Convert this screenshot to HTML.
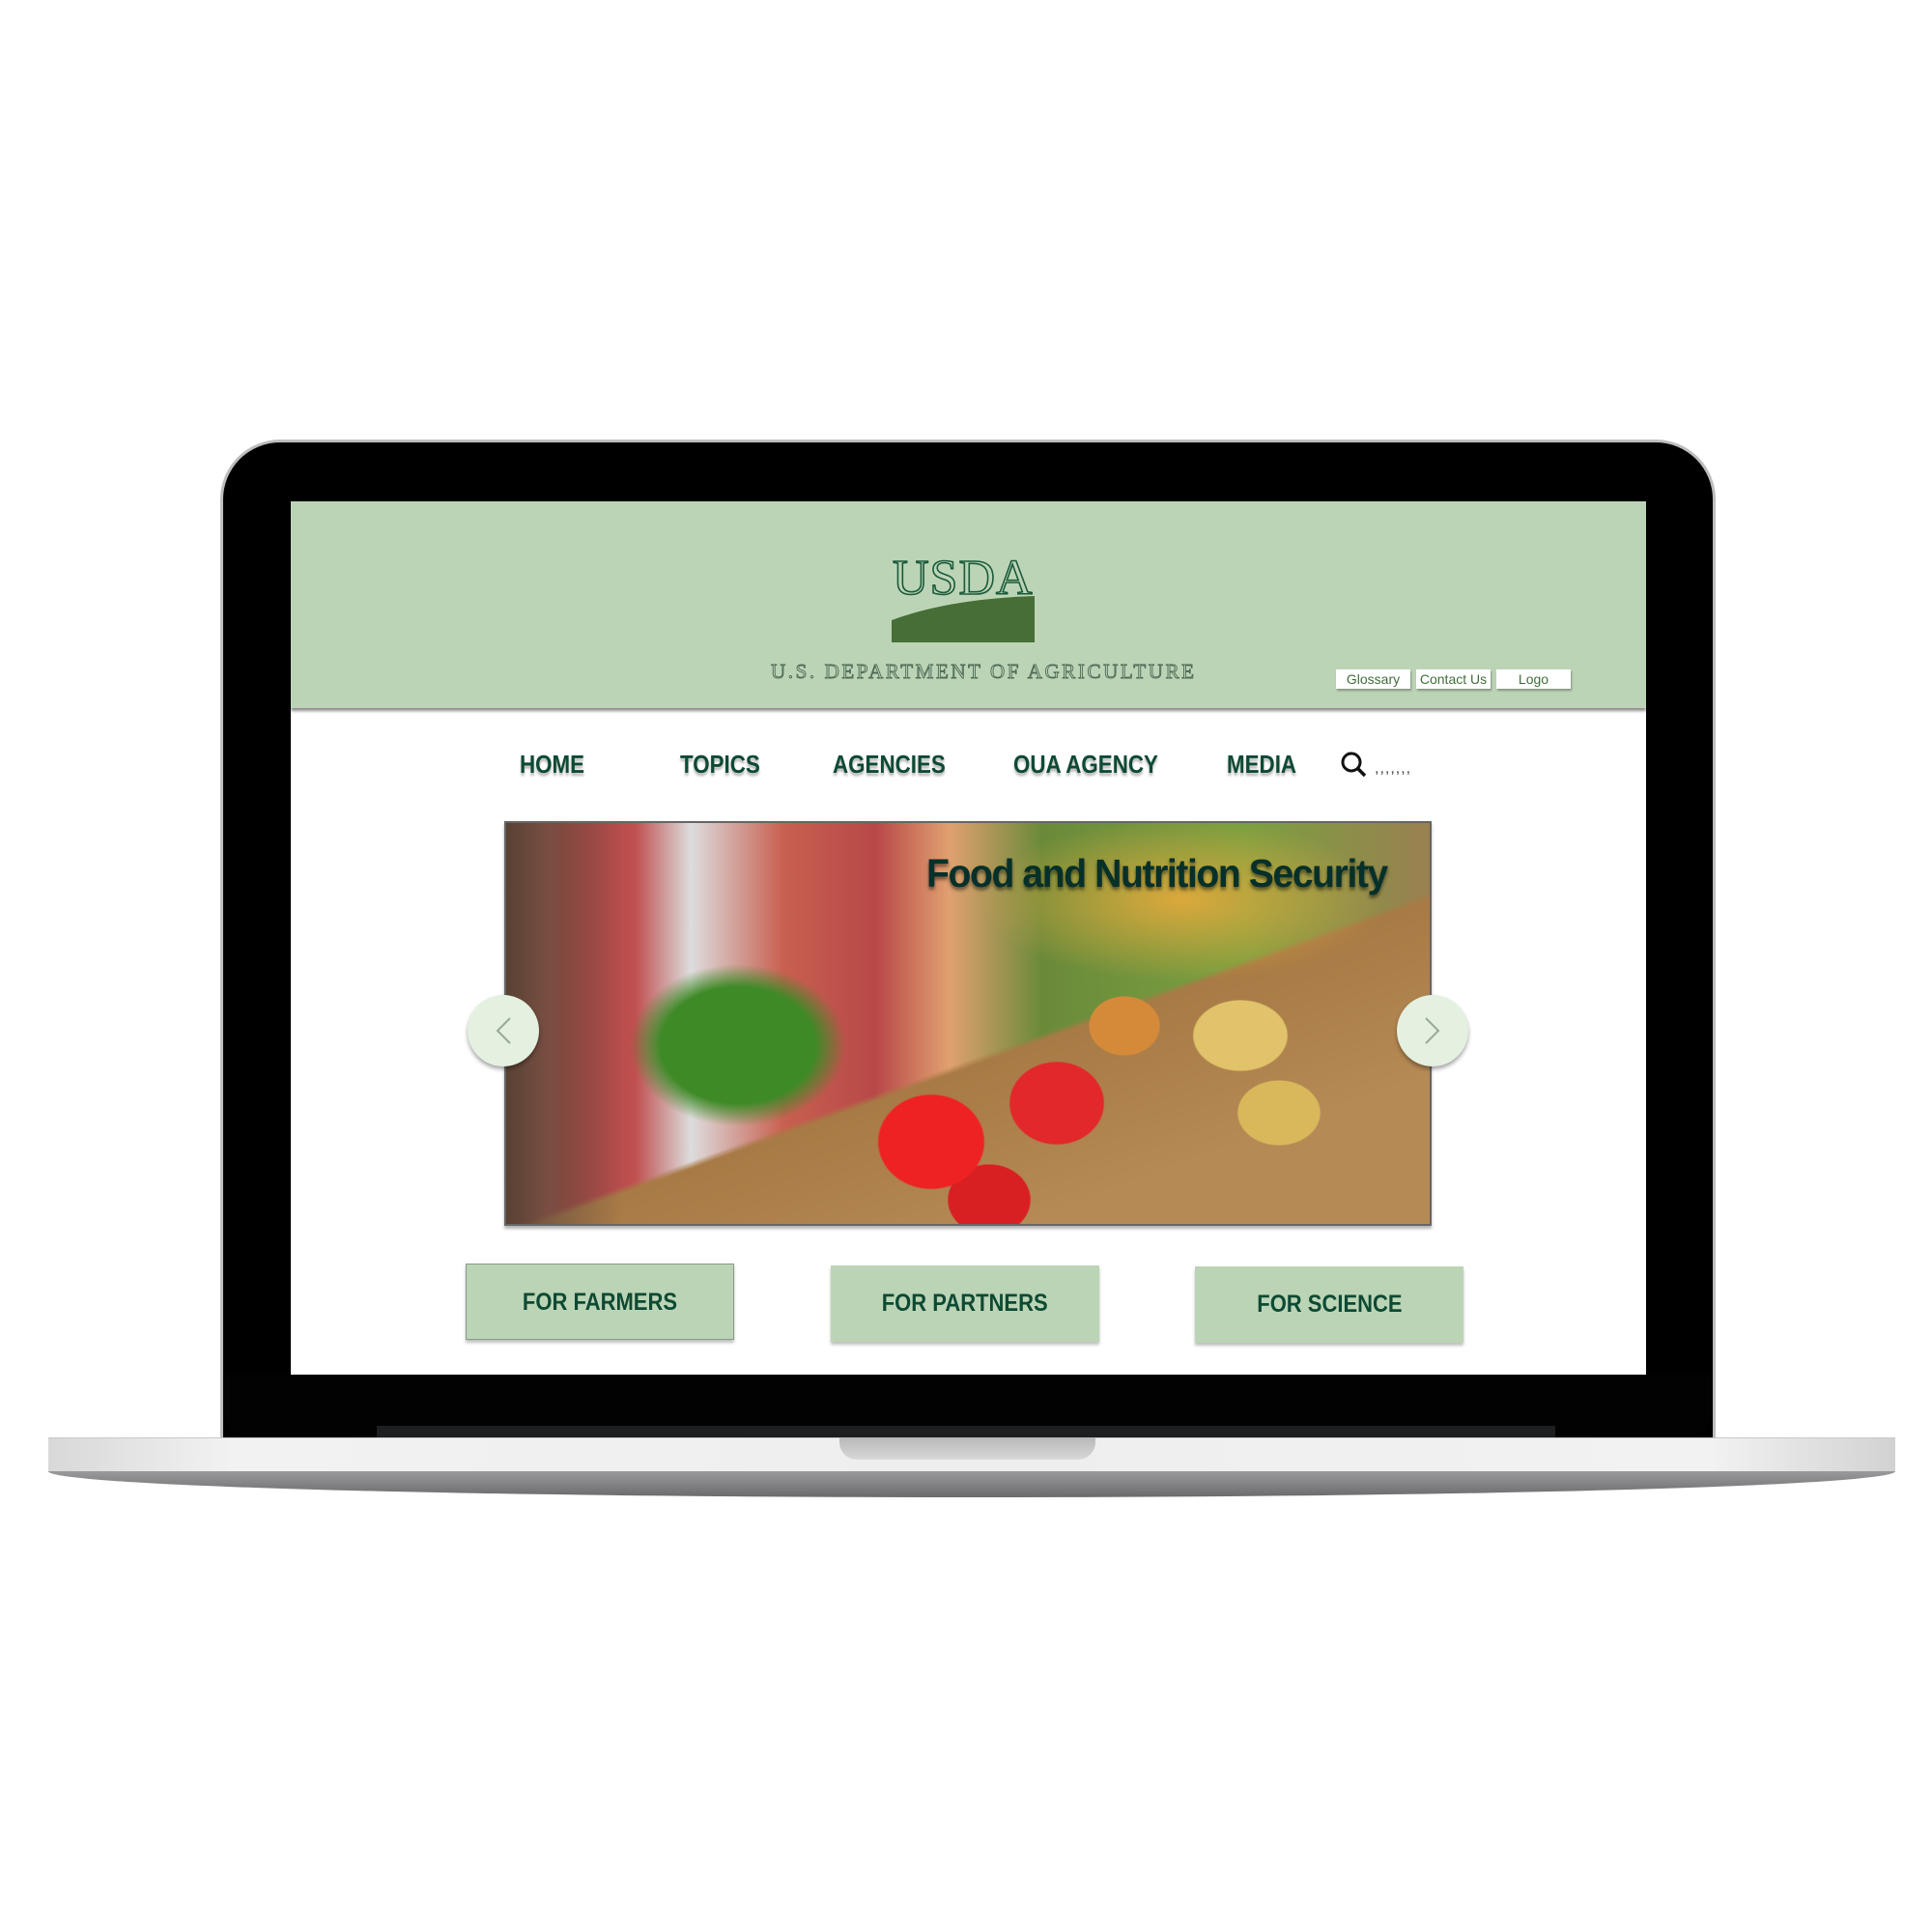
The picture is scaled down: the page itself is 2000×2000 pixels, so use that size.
<!DOCTYPE html>
<html><head><meta charset="utf-8"><style>
*{margin:0;padding:0;box-sizing:border-box}
body{width:2000px;height:2000px;background:#fff;position:relative;overflow:hidden;font-family:"Liberation Sans",sans-serif}
.abs{position:absolute}
#lid{left:228px;top:455px;width:1548px;height:1040px;background:#000;border-radius:62px 62px 0 0;border:3px solid #bdbdbd;border-bottom:none}
#lidlow{left:232px;top:1423px;width:1540px;height:66px;background:#020202;border-radius:0 0 30px 30px}
#hinge{left:390px;top:1476px;width:1220px;height:12px;background:#1c1e20}
#screen{left:301px;top:519px;width:1403px;height:904px;background:#fff;overflow:hidden}
#hdr{left:0;top:0;width:1403px;height:214px;background:#bcd4b6;box-shadow:0 3px 3px rgba(0,0,0,.45)}
#base{left:50px;top:1488px;width:1912px;height:36px;background:linear-gradient(90deg,#d8d8d8,#f2f2f2 10%,#eeeeee 50%,#f2f2f2 90%,#d2d2d2);border-top:1px solid #c8c8c8}
#base2{left:50px;top:1523px;width:1912px;height:27px;background:linear-gradient(#9a9a9c,#6a6a6e);border-radius:0 0 50% 50%/0 0 100% 100%}
#notch{left:869px;top:1488px;width:265px;height:23px;background:linear-gradient(#b8b8b8,#d8d8d8);border-radius:0 0 18px 18px}
.tb{position:absolute;top:174px;height:20px;background:#fff;color:#3f6f3a;font-size:14px;text-align:center;line-height:20px;box-shadow:1px 2px 2px rgba(0,0,0,.3)}
.nav{position:absolute;top:257px;color:#0d4a33;font-weight:bold;font-size:26px;text-shadow:0 3px 3px rgba(0,0,0,.3);transform:scaleX(.86);transform-origin:left;white-space:nowrap}
.btn{position:absolute;top:789px;width:278px;height:79px;background:#bcd4b6;color:#0d4a33;font-weight:bold;font-size:25px;text-align:center;line-height:79px;box-shadow:0 3px 3px rgba(0,0,0,.25)}
.btn span{display:inline-block;transform:scaleX(.88)}
.arr{position:absolute;width:74px;height:74px;border-radius:50%;background:#e4f0e0;box-shadow:0 3px 4px rgba(0,0,0,.35)}
</style></head><body>
<div id="lid" class="abs"></div>
<div id="lidlow" class="abs"></div>
<div id="hinge" class="abs"></div>
<div id="screen" class="abs">
 <div id="hdr" class="abs">
  <div class="abs" style="left:623px;top:50px;font-family:'Liberation Serif',serif;font-size:52px;color:#bcd4b6;-webkit-text-stroke:1.6px #1a5a3a;letter-spacing:1px">USDA</div>
  <svg class="abs" style="left:622px;top:98px" width="148" height="48"><path d="M0 25 Q60 3 148 0 L148 48 L0 48Z" fill="#466e36"/></svg>
  <div class="abs" style="left:497px;top:164px;font-family:'Liberation Serif',serif;font-size:21px;color:#bcd4b6;-webkit-text-stroke:.9px #4d6a55;letter-spacing:2.6px;white-space:nowrap">U.S. DEPARTMENT OF AGRICULTURE</div>
  <div class="tb" style="left:1082px;width:77px">Glossary</div>
  <div class="tb" style="left:1165px;width:77px">Contact Us</div>
  <div class="tb" style="left:1248px;width:77px">Logo</div>
 </div>
 <div class="nav" style="left:237px">HOME</div>
 <div class="nav" style="left:403px">TOPICS</div>
 <div class="nav" style="left:561px">AGENCIES</div>
 <div class="nav" style="left:748px">OUA AGENCY</div>
 <div class="nav" style="left:969px">MEDIA</div>
 <svg class="abs" style="left:1086px;top:258px" width="30" height="30"><circle cx="12" cy="12" r="9" fill="none" stroke="#111" stroke-width="3"/><path d="M18 18 L26 26" stroke="#111" stroke-width="3.5"/></svg>
 <div class="abs" style="left:1122px;top:268px;font-size:16px;color:#444;letter-spacing:1px">,,,,,,,</div>
 <div class="abs" style="left:221px;top:331px;width:960px;height:419px;border:2px solid #666;box-shadow:0 3px 3px rgba(0,0,0,.3);overflow:hidden;background:
  radial-gradient(ellipse 90px 80px at 440px 330px,#e22 60%,transparent 62%),
  radial-gradient(ellipse 80px 70px at 570px 290px,#e2282a 60%,transparent 62%),
  radial-gradient(ellipse 70px 60px at 500px 390px,#d81f22 60%,transparent 62%),
  radial-gradient(ellipse 80px 60px at 760px 220px,#e0c36a 60%,transparent 62%),
  radial-gradient(ellipse 70px 55px at 800px 300px,#d8b85a 60%,transparent 62%),
  radial-gradient(ellipse 60px 50px at 640px 210px,#d58a3a 60%,transparent 62%),
  radial-gradient(ellipse 160px 120px at 240px 230px,#3d8a26 50%,transparent 70%),
  radial-gradient(ellipse 300px 120px at 700px 80px,rgba(230,170,60,.9),transparent 70%),
  linear-gradient(160deg,transparent 55%,#a87a45 56%,#b58a55 80%),
  linear-gradient(90deg,#8a6a55 0,#a04040 6%,#c05050 14%,#ddd 20%,#c86050 30%,#b84848 40%,#e0a070 48%,#6a8a3a 58%,#7aa040 80%,#9a8050 100%)">
  <div class="abs" style="left:-9px;top:0;width:130px;height:419px;background:linear-gradient(90deg,#3a2a20,#6a5040 40%,transparent);opacity:.7"></div>
  <div class="abs" style="left:435px;top:29px;font-weight:bold;font-size:41px;color:#06302a;letter-spacing:-1.5px;white-space:nowrap;text-shadow:0 3px 4px rgba(0,0,0,.5);transform:scaleX(.955);transform-origin:left">Food and Nutrition Security</div>
 </div>
 <div class="arr" style="left:183px;top:511px"><svg width="74" height="74"><path d="M44 24 L31 37 L44 50" fill="none" stroke="#9aa89a" stroke-width="2"/></svg></div>
 <div class="arr" style="left:1145px;top:511px"><svg width="74" height="74"><path d="M30 24 L43 37 L30 50" fill="none" stroke="#9aa89a" stroke-width="2"/></svg></div>
 <div class="btn" style="left:181px;border:1.5px solid #8a9a88"><span>FOR FARMERS</span></div>
 <div class="btn" style="left:559px;top:791px"><span>FOR PARTNERS</span></div>
 <div class="btn" style="left:936px;top:792px"><span>FOR SCIENCE</span></div>
</div>
<div id="base" class="abs"></div>
<div id="base2" class="abs"></div>
<div id="notch" class="abs"></div>
</body></html>
